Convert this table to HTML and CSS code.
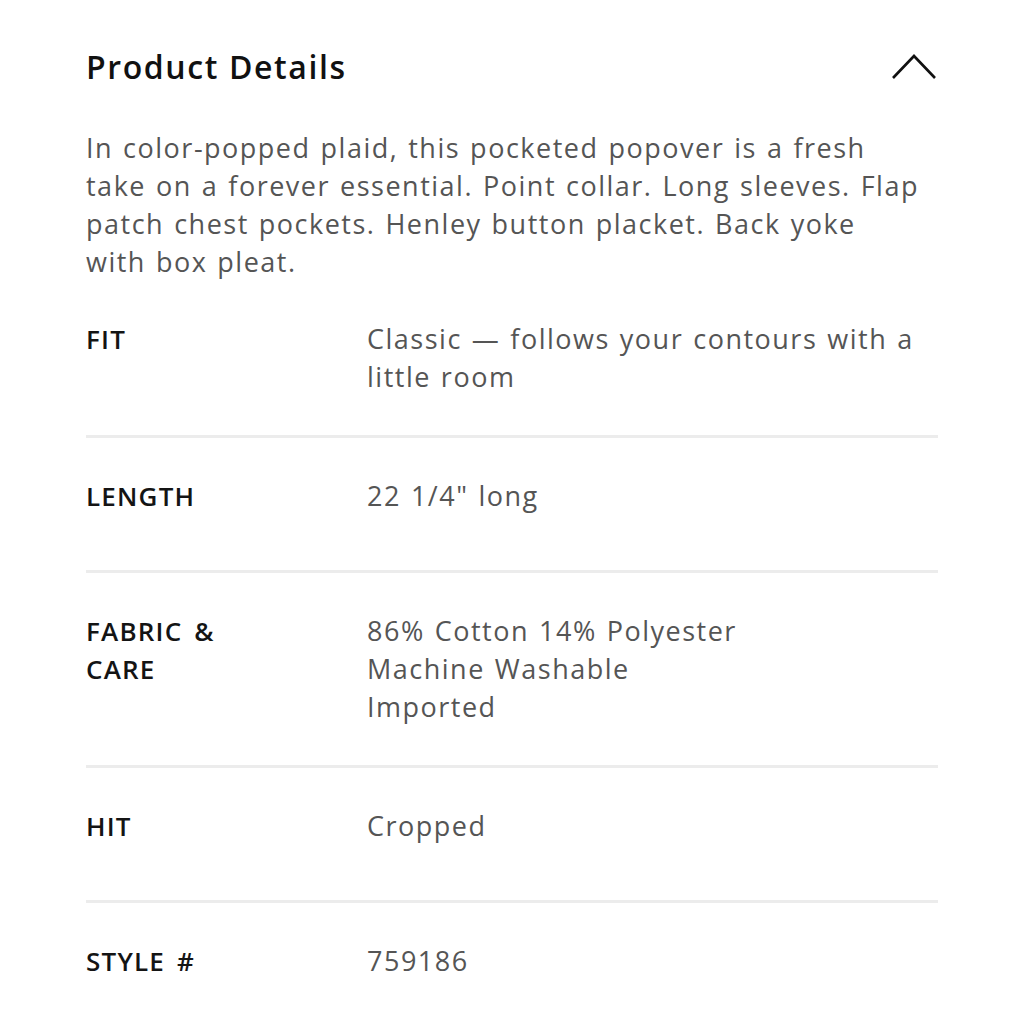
FILE: index.html
```html
<!DOCTYPE html>
<html lang="en">
<head>
<meta charset="utf-8">
<title>Product Details</title>
<link rel="stylesheet" href="styles.css">
</head>
<body>
<section class="details">
  <header class="details-head">
    <h2 class="details-title">Product Details</h2>
    <svg class="chevron" width="46" height="28" viewBox="0 0 46 28" aria-hidden="true">
      <polyline points="2,25 23,3 44,25" fill="none" stroke="#111" stroke-width="2.6"/>
    </svg>
  </header>
  <p class="details-desc">In color-popped plaid, this pocketed popover is a fresh<br>take on a forever essential. Point collar. Long sleeves. Flap<br>patch chest pockets. Henley button placket. Back yoke<br>with box pleat.</p>
  <dl class="spec-list">
    <div class="spec-row first">
      <dt class="spec-label">FIT</dt>
      <dd class="spec-value">Classic — follows your contours with a<br>little room</dd>
    </div>
    <div class="spec-row">
      <dt class="spec-label">LENGTH</dt>
      <dd class="spec-value">22 1/4" long</dd>
    </div>
    <div class="spec-row">
      <dt class="spec-label">FABRIC &amp;<br>CARE</dt>
      <dd class="spec-value">86% Cotton 14% Polyester<br>Machine Washable<br>Imported</dd>
    </div>
    <div class="spec-row">
      <dt class="spec-label">HIT</dt>
      <dd class="spec-value">Cropped</dd>
    </div>
    <div class="spec-row">
      <dt class="spec-label">STYLE #</dt>
      <dd class="spec-value">759186</dd>
    </div>
  </dl>
</section>
</body>
</html>
```
FILE: styles.css
```css
html, body {
  margin: 0;
  padding: 0;
  background: #fff;
}
body {
  font-family: "Open Sans", "Noto Sans", sans-serif;
  color: #555;
}
.details {
  width: 852px;
  padding: 42px 0 0 86px;
}
.details-head {
  display: flex;
  justify-content: space-between;
  align-items: center;
  height: 48px;
}
.details-title {
  margin: 0;
  font-size: 32px;
  font-weight: 600;
  color: #111;
  letter-spacing: 1.6px;
}
.chevron {
  display: block;
  margin-right: 1px;
  margin-top: 2px;
}
.details-desc {
  margin: 39px 0 0;
  font-size: 27px;
  line-height: 38px;
  color: #555;
  letter-spacing: 1.5px;
  word-spacing: 1.5px;
}
.spec-list {
  margin: 39px 0 0;
  padding: 0;
}
.spec-row {
  display: grid;
  grid-template-columns: 281px 1fr;
  min-height: 54px;
  padding: 39px 0 39px;
  border-top: 3px solid #ececec;
}
.spec-row.first {
  border-top: none;
  padding-top: 0;
}
.spec-label {
  margin: 0;
  font-size: 26px;
  line-height: 38px;
  font-weight: 600;
  color: #141414;
  letter-spacing: 1.2px;
  word-spacing: 4px;
}
.spec-value {
  margin: 0;
  font-size: 27px;
  line-height: 38px;
  color: #555;
  letter-spacing: 1.5px;
  word-spacing: 1.5px;
}
```
